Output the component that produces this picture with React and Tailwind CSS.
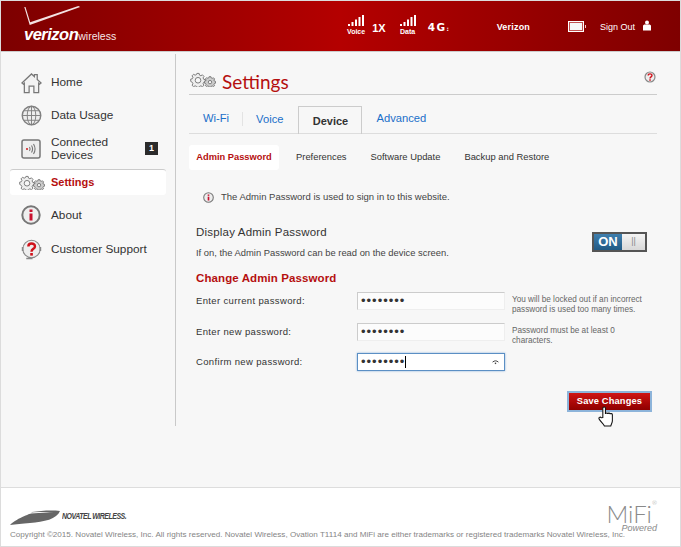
import { Fragment } from 'react';

const font = "font-['Liberation_Sans',Arial,sans-serif]";

const GearsIcon = ({ className }) => (
  <svg viewBox="0 0 28 16" className={`${className} shrink-0`} fill="none" stroke="#777" strokeWidth="1">
    <path d="M8 1.500h2.400l.4 1.800 1.500.7 1.600-1 1.700 1.700-1 1.600.7 1.500 1.700.4v2.400l-1.700.4-.7 1.500 1 1.600-1.700 1.600-1.600-1-1.500.7-.4.900H8l-.4-.9-1.500-.7-1.600 1-1.700-1.600 1-1.600-.7-1.500L1.400 10V7.600l1.700-.4.7-1.500-1-1.600 1.700-1.700 1.600 1 1.500-.7z" fill="#eee" />
    <circle cx="9.200" cy="8.800" r="3" fill="#f7f7f7" />
    <path d="M21 5h2l.3 1.300 1.100.5 1.200-.7 1.300 1.300-.7 1.200.5 1.100 1.200.3v1.900l-1.200.3-.5 1.100.7 1.200-1.300 1-1.200-.7-1.100.5-.3.9h-2l-.3-.9-1.100-.5-1.200.7-1.300-1 .7-1.200-.5-1.100-1.200-.3V9.900l1.200-.3.5-1.100-.7-1.200 1.300-1.300 1.200.7 1.100-.5z" fill="#ccc" />
    <circle cx="22" cy="10.800" r="1.800" fill="#f7f7f7" />
  </svg>
);

const HomeIcon = () => (
  <svg viewBox="0 0 22 22" className="w-[21px] h-[22px] shrink-0" fill="#f2f2f2" stroke="#777" strokeWidth="1.300">
    <path d="M1 11 11 1.500l3 2.800V2.200h3v5l4 3.800-1.500 1.200-1-1v10H13.500v-7h-5v7H3.500v-10l-1 1z" />
  </svg>
);

const GlobeIcon = () => (
  <svg viewBox="0 0 22 22" className="w-[21px] h-[21px] shrink-0" fill="none" stroke="#808080" strokeWidth="1">
    <circle cx="11" cy="11" r="9.700" fill="#ededed" strokeWidth="1.500" />
    <ellipse cx="11" cy="11" rx="4.500" ry="9.700" />
    <path d="M11 1.300v19.400M1.300 11h19.400M2.800 6h16.400M2.800 16h16.400" />
  </svg>
);

const DevicesIcon = () => (
  <svg viewBox="0 0 20 20" className="w-[20px] h-[20px] shrink-0" fill="none">
    <rect x="1" y="1" width="18" height="18" rx="2" fill="#eee" stroke="#777" strokeWidth="1.500" />
    <circle cx="6" cy="10" r="0.900" fill="#c00" />
    <path d="M8.500 8c.8 1.300.8 2.700 0 4M10.500 6.500c1.400 2.300 1.400 4.700 0 7M12.500 5c2 3.200 2 6.800 0 10" stroke="#777" strokeWidth="1.100" />
  </svg>
);

const InfoIcon = ({ className }) => (
  <svg viewBox="0 0 20 20" className={`${className} shrink-0`}>
    <circle cx="10" cy="10" r="8.700" fill="#eee" stroke="#777" strokeWidth="2" />
    <rect x="8.500" y="8.500" width="3" height="7" fill="#c8102e" />
    <rect x="8.500" y="4.500" width="3" height="2.500" fill="#c8102e" />
  </svg>
);

const HelpIcon = ({ className, headset }) => (
  <svg viewBox="0 0 20 20" className={`${className} shrink-0`} fill="none">
    <circle cx="10" cy="10" r="8.300" fill="#eee" stroke="#888" strokeWidth={headset ? 1 : 2} />
    {headset && <path d="M1.500 8v4M18.500 8v4M5 19h6" stroke="#888" strokeWidth="1.500" />}
    <path d="M7 7.500C7 3.800 13.300 3.800 13.300 7.500c0 2.300-3.300 2.300-3.300 5" stroke="#d0121b" strokeWidth="2.300" />
    <rect x="8.800" y="13.800" width="2.500" height="2.500" fill="#d0121b" />
  </svg>
);

const SignalBars = () => (
  <svg viewBox="0 0 16 11" className="w-[16px] h-[11px]" fill="#fff">
    <rect x="0" y="9" width="2" height="2" />
    <rect x="3.500" y="7" width="2" height="4" />
    <rect x="7" y="4.500" width="2" height="6.500" />
    <rect x="10.500" y="2" width="2" height="9" />
    <rect x="14" y="0" width="2" height="11" />
  </svg>
);

const navItems = [
  { label: 'Home', icon: <HomeIcon />, h: 'h-[33px]' },
  { label: 'Data Usage', icon: <GlobeIcon />, h: 'h-[33px]' },
  { label: 'Connected Devices', icon: <DevicesIcon />, h: 'h-[33px]', badge: '1' },
  { label: 'Settings', icon: <GearsIcon className="w-[27px] h-[15px]" />, h: 'h-[26px] mt-[4px] mb-[3px]', active: true },
  { label: 'About', icon: <InfoIcon className="w-[20px] h-[20px]" />, h: 'h-[34px]' },
  { label: 'Customer Support', icon: <HelpIcon className="w-[21px] h-[22px]" headset />, h: 'h-[34px]' },
];

const subTabs = ['Admin Password', 'Preferences', 'Software Update', 'Backup and Restore'];

const fields = [
  { label: 'Enter current password:', h: 'h-[31px]', hint: ['You will be locked out if an incorrect', 'password is used too many times.'] },
  { label: 'Enter new password:', h: 'h-[30px]', hint: ['Password must be at least 0', 'characters.'] },
  { label: 'Confirm new password:', h: 'h-[31px]', focused: true },
];

export default function App() {
  return (
    <div className={`${font} w-[681px] h-[547px] border border-[#dcdcdc] bg-[#f7f7f7] flex flex-col overflow-hidden`}>
      {/* Header */}
      <header className="h-[51px] shrink-0 flex items-start bg-gradient-to-r from-[#7d0000] via-[#b40000] to-[#7f0000] text-white border-b border-[#ccc]">
        <div className="ml-[20px] mt-[5px] w-[100px] relative h-[36px]">
          <svg viewBox="0 0 62 22" className="absolute left-0 top-0 w-[62px] h-[20px]">
            <path d="M0.500 1 1.800 1 7 18 60 0 62 1 6.500 21z" fill="#f3e3e3" />
          </svg>
          <div className="absolute left-[3px] top-[20px] flex items-baseline leading-none">
            <span className="text-[16.500px] font-bold italic tracking-[-0.5px]">verizon</span>
            <span className="text-[10.500px] text-[#f7e8e8]">wireless</span>
          </div>
        </div>

        <div className="ml-[226px] mt-[14px] flex flex-col items-center">
          <SignalBars />
          <span className="text-[7px] font-bold leading-[12px]">Voice</span>
        </div>
        <span className="ml-[7px] mt-[20px] text-[11px] font-bold leading-[14px]">1X</span>
        <div className="ml-[14px] mt-[14px] flex flex-col items-center">
          <SignalBars />
          <span className="text-[7px] font-bold leading-[12px]">Data</span>
        </div>
        <span className="ml-[12px] mt-[19px] w-[23px] text-[10.500px] font-bold leading-[14px] tracking-[1.500px] font-['DejaVu_Sans',sans-serif]">4G<span className="text-[6px]">:</span></span>
        <span className="ml-[46px] mt-[19px] text-[9px] font-bold leading-[14px] tracking-[0.2px]">Verizon</span>
        <div className="ml-[38px] mt-[20px] w-[16px] h-[11px] border border-white bg-[#f7f7f7] outline outline-[#c05050] -outline-offset-2 relative">
          <span className="absolute -right-[3px] top-[3px] w-[1px] h-[3px] bg-[#f0c8c8]"></span>
        </div>
        <span className="ml-[16px] mt-[19px] text-[9px] leading-[14px]">Sign Out</span>
        <svg viewBox="0 0 8 10" className="ml-[8px] mt-[19px] w-[8px] h-[11px]" fill="#fff">
          <circle cx="4" cy="2" r="2" />
          <path d="M0 10V5.500C0 4.500 1 4 2 4h4c1 0 2 .5 2 1.500V10z" />
        </svg>
      </header>

      {/* Body */}
      <div className="flex-1 flex min-h-0">
        {/* Sidebar */}
        <aside className="w-[175px] h-[372px] mt-[2px] shrink-0 border-r border-[#c9c9c9] pl-[9px] pr-[9px] pt-[12px]">
          {navItems.map((item) => (
            <div
              key={item.label}
              className={`${item.h} flex items-center pl-[10px] ${item.active ? 'bg-white rounded-[3px] border-t border-[#ccc]' : ''}`}
            >
              <span className="w-[22px] flex justify-center shrink-0">{item.icon}</span>
              <span
                className={`ml-[9px] leading-[13px] ${item.active ? 'text-[11px] font-bold text-[#b50f0f]' : 'text-[11.800px] text-[#333] font-medium'} ${item.badge ? 'w-[70px]' : ''}`}
              >
                {item.label}
              </span>
              {item.badge && (
                <span className="ml-[24px] w-[13px] h-[13px] bg-[#2b2b2b] text-white text-[9px] font-bold flex items-center justify-center">
                  {item.badge}
                </span>
              )}
            </div>
          ))}
        </aside>

        {/* Main */}
        <main className="flex-1 pl-[13px] pr-[23px] pt-[17px] min-w-0">
          <div className="h-[26px] flex items-start border-b border-[#ccc] relative">
            <GearsIcon className="w-[27px] h-[15px] mt-[3px]" />
            <h1 className="ml-[6px] mt-[1px] text-[19px] leading-[24px] text-[#b50f0f] font-['Lato',sans-serif] font-normal">Settings</h1>
            <HelpIcon className="absolute right-[1px] top-[2px] w-[12px] h-[12px]" />
          </div>

          {/* Tabs */}
          <div className="mt-[11px] h-[28px] flex border-b border-[#ddd] text-[11.200px] text-[#1a6fc9] leading-[14px]">
            <div className="ml-[14px] pt-[5px]">Wi-Fi</div>
            <div className="ml-[13px] mt-[6px] h-[14px] pl-[13px] border-l border-[#e3e3e3]">Voice</div>
            <div className="ml-[15px] w-[64px] h-[28px] border border-b-0 border-[#ccc] flex items-center justify-center text-[#333] font-bold text-[11px]">Device</div>
            <div className="ml-[14px] pt-[5px]">Advanced</div>
          </div>

          {/* Sub tabs */}
          <div className="mt-[11px] flex text-[9.400px] text-[#333]">
            {subTabs.map((t, i) => (
              <div
                key={t}
                className={i === 0
                  ? 'w-[90px] h-[25px] bg-white rounded-[3px] flex items-center justify-center text-[#b50f0f] font-bold text-[9.300px]'
                  : `h-[25px] flex items-center ${i === 1 ? 'ml-[17px]' : 'ml-[24px]'}`}
              >
                {t}
              </div>
            ))}
          </div>

          {/* Info */}
          <div className="mt-[20px] ml-[14px] flex items-center text-[#444] text-[9.500px] h-[14px]">
            <InfoIcon className="w-[11px] h-[11px]" />
            <span className="ml-[7px]">The Admin Password is used to sign in to this website.</span>
          </div>

          {/* Display password */}
          <div className="mt-[21px] ml-[7px] flex justify-between items-start">
            <div>
              <div className="text-[11.500px] leading-[14px] font-medium text-[#333] tracking-[0.2px]">Display Admin Password</div>
              <div className="mt-[7px] text-[9.400px] leading-[14px] text-[#444]">If on, the Admin Password can be read on the device screen.</div>
            </div>
            <div className="mr-[10px] mt-[7px] w-[55px] h-[20px] border-2 border-[#555] flex">
              <span className="w-[28px] bg-gradient-to-b from-[#3f7fae] to-[#225a85] text-white text-[13px] font-bold flex items-center justify-center">ON</span>
              <span className="flex-1 bg-gradient-to-b from-[#f4f4f4] to-[#d8d8d8] flex items-center justify-center text-[#888] text-[9px]">||</span>
            </div>
          </div>

          <h2 className="mt-[11px] ml-[7px] text-[#b50f0f] text-[11.500px] leading-[14px] font-bold tracking-[0.1px]">Change Admin Password</h2>

          {/* Password fields */}
          <div className="mt-[7px] ml-[7px] flex flex-col">
            {fields.map((f) => (
              <div key={f.label} className={`${f.h} flex items-start`}>
                <label className="w-[161px] text-[9.500px] font-medium text-[#333] leading-[18px] tracking-[0.35px]">{f.label}</label>
                <div
                  className={`w-[148px] h-[18px] flex items-center pl-[3px] pr-[5px] text-[#333] text-[13px] tracking-[1px] ${
                    f.focused
                      ? 'bg-white border border-[#5b8fc4] shadow-[0_0_2px_#8ab2dc]'
                      : 'bg-[#fcfcfc] border-t border-l border-[#ccc] border-r border-r-[#eee] border-b border-b-[#eee]'
                  }`}
                >
                  <span>••••••••</span>
                  {f.focused && (
                    <Fragment>
                      <span className="w-px h-[12px] bg-black"></span>
                      <svg viewBox="0 0 8 6" className="ml-auto w-[7px] h-[5px]" fill="none" stroke="#444" strokeWidth="1.200">
                        <path d="M.5 2.500C3 .5 5 .5 7.500 2.500" />
                        <circle cx="4" cy="4" r="1" fill="#444" stroke="none" />
                      </svg>
                    </Fragment>
                  )}
                </div>
                {f.hint && (
                  <div className="ml-[7px] mt-[3px] text-[8.200px] leading-[10px] text-[#666]">
                    <div>{f.hint[0]}</div>
                    <div>{f.hint[1]}</div>
                  </div>
                )}
              </div>
            ))}
          </div>

          {/* Save */}
          <div className="mt-[7px] flex justify-end mr-[5px] relative">
            <button className="w-[85px] h-[21px] border-2 border-[#8db4da] bg-gradient-to-b from-[#cf1414] to-[#8f0000] text-white text-[9.300px] font-bold tracking-[0.15px]">
              Save Changes
            </button>
            <svg viewBox="0 0 16 20" className="absolute right-[37px] top-[15px] w-[17px] h-[21px]" fill="#fff" stroke="#111" strokeWidth="1">
              <path d="M4.500 11V2c0-1.500 2.500-1.500 2.500 0v5.500c0-1 2.200-1 2.300 0 .1-1 2.200-1 2.300.2.200-.8 2-.6 2 .6V14c0 2-1 3-1.500 5H6c-1-2-3.500-4-5-6.500-.8-1.500 1-2.500 2-1.300z" />
            </svg>
          </div>
        </main>
      </div>

      {/* Footer */}
      <footer className="h-[59px] shrink-0 bg-white border-t border-[#ddd] pl-[9px] pr-[23px] relative">
        <div className="mt-[21px] flex items-center h-[16px]">
          <svg viewBox="0 0 50 15" className="w-[50px] h-[15px] shrink-0" fill="#666">
            <path d="M0 15C8 7 22 4 22 2 30 1 40 0 50 1 47 9 34 12 20 13 12 14 6 14 0 15z" />
            <path d="M8 5C18 2 30 1 44 3 30 2 18 4 8 5z" fill="#fff" />
          </svg>
          <span className="ml-[2px] text-[7px] font-bold italic text-[#444] tracking-[-0.5px] scale-y-125 whitespace-nowrap">NOVATEL WIRELESS.</span>
        </div>
        <p className="mt-[4px] text-[8.100px] leading-[12px] text-[#858585] whitespace-nowrap">
          Copyright ©2015. Novatel Wireless, Inc. All rights reserved. Novatel Wireless, Ovation T1114 and MiFi are either trademarks or registered trademarks Novatel Wireless, Inc.
        </p>
        {/* MiFi mark sits over the footer corner */}
        <div className="absolute right-[23px] top-[15px] flex flex-col items-end text-[#8a8a8a]">
          <span className="text-[24px] leading-[21px] font-['Lato',sans-serif] font-light">MiFi<sup className="text-[6px] leading-none align-top">®</sup></span>
          <span className="text-[9px] italic leading-[8px]">Powered</span>
        </div>
      </footer>
    </div>
  );
}
